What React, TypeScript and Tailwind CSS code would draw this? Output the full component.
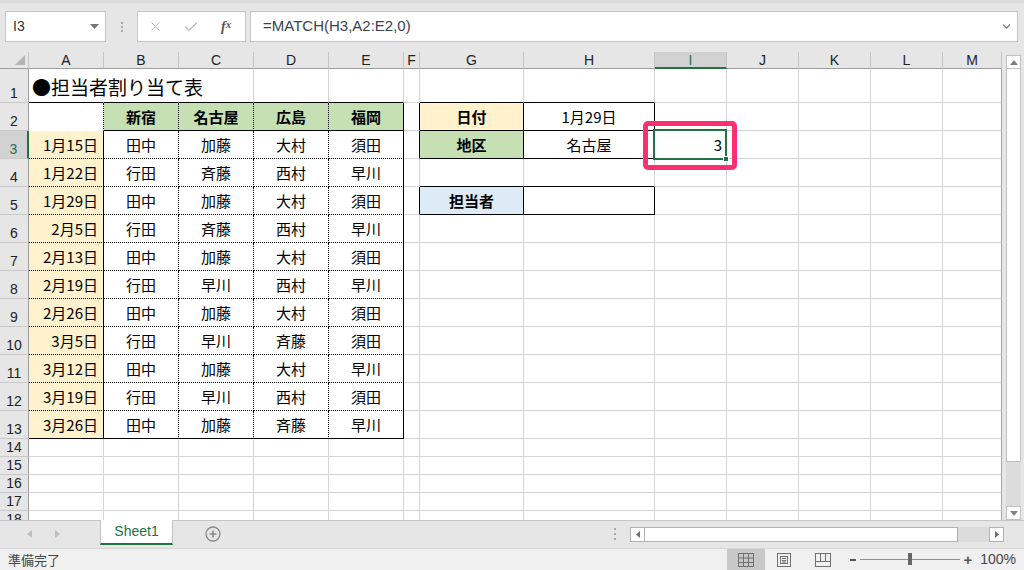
import { X, Check, ChevronDown } from 'lucide-react'

const COLS = ['A', 'B', 'C', 'D', 'E', 'F', 'G', 'H', 'I', 'J', 'K', 'L', 'M']

const ROWS: Record<number, string[]> = {
  3: ['1月15日', '田中', '加藤', '大村', '須田'],
  4: ['1月22日', '行田', '斉藤', '西村', '早川'],
  5: ['1月29日', '田中', '加藤', '大村', '須田'],
  6: ['2月5日', '行田', '斉藤', '西村', '早川'],
  7: ['2月13日', '田中', '加藤', '大村', '須田'],
  8: ['2月19日', '行田', '早川', '西村', '早川'],
  9: ['2月26日', '田中', '加藤', '大村', '須田'],
  10: ['3月5日', '行田', '早川', '斉藤', '須田'],
  11: ['3月12日', '田中', '加藤', '大村', '早川'],
  12: ['3月19日', '行田', '早川', '西村', '須田'],
  13: ['3月26日', '田中', '加藤', '斉藤', '早川'],
}

const HEAD = ['', '新宿', '名古屋', '広島', '福岡']

type B = 'g' | 's' | 'd' | 'n' | 'e'

const RIGHT: Record<B, string> = {
  g: 'border-r-[#d4d4d4]',
  s: 'border-r-black',
  d: 'border-r-black [border-right-style:dotted]',
  n: 'border-r-transparent',
  e: 'border-r-[#a6a6a6]',
}
const BOTTOM: Record<B, string> = {
  g: 'border-b-[#d4d4d4]',
  s: 'border-b-black',
  d: 'border-b-black [border-bottom-style:dotted]',
  n: 'border-b-transparent',
  e: 'border-b-[#a6a6a6]',
}

function borders(r: number, c: number): [B, B] {
  let right: B = c === 12 ? 'e' : 'g'
  let bottom: B = 'g'
  if (r === 1) {
    if (c === 0 || c === 1) right = 'n'
    if (c <= 4 || c === 6 || c === 7) bottom = 's'
  }
  if (r === 2) {
    if (c === 0) { right = 'd'; bottom = 'n' }
    if (c >= 1 && c <= 3) { right = 'd'; bottom = 's' }
    if (c === 4) { right = 's'; bottom = 's' }
  }
  if (r >= 3 && r <= 13 && c <= 4) {
    right = c === 0 || c === 4 ? 's' : 'd'
    bottom = r < 13 ? 'd' : 's'
  }
  if ((r === 2 || r === 3 || r === 5) && c === 5) right = 's'
  if ((r === 2 || r === 3 || r === 5) && (c === 6 || c === 7)) { right = 's'; bottom = 's' }
  if (r === 4 && (c === 6 || c === 7)) bottom = 's'
  return [right, bottom]
}

function Cell({ r, c }: { r: number; c: number }) {
  const [rb, bb] = borders(r, c)
  let bg = ''
  let align = 'justify-center'
  let bold = false
  let text = ''
  let overlay = false

  if (r === 1 && c === 0) {
    return (
      <div className={`border-r border-b ${RIGHT[rb]} ${BOTTOM[bb]} flex items-end pb-[2px] pl-[3px]`}>
        <span className="relative z-10 whitespace-nowrap text-[19px] leading-[26px] text-black">●担当者割り当て表</span>
      </div>
    )
  }
  if (r === 2 && c >= 1 && c <= 4) { text = HEAD[c]; bg = 'bg-[#c6e0b4]'; bold = true }
  if (ROWS[r] && c <= 4) {
    text = ROWS[r][c]
    if (c === 0) { bg = 'bg-[#fff2cc]'; align = 'justify-end pr-[5px]' }
  }
  if (r === 2 && c === 6) { text = '日付'; bg = 'bg-[#fff2cc]'; bold = true }
  if (r === 2 && c === 7) text = '1月29日'
  if (r === 3 && c === 6) { text = '地区'; bg = 'bg-[#c6e0b4]'; bold = true }
  if (r === 3 && c === 7) text = '名古屋'
  if (r === 5 && c === 6) { text = '担当者'; bg = 'bg-[#ddebf7]'; bold = true }
  if (r === 3 && c === 8) { text = '3'; align = 'justify-end pr-[4px]'; overlay = true }

  return (
    <div
      className={`relative border-r border-b ${RIGHT[rb]} ${BOTTOM[bb]} ${bg} flex items-end pb-[3px] ${align} text-[15px] leading-[20px] text-black ${bold ? 'font-bold' : ''}`}
    >
      {text}
      {overlay && (
        <>
          <div className="absolute -left-[2px] -top-[2px] -right-[1px] -bottom-[2px] border-2 border-[#217346] z-20" />
          <div className="absolute -right-[3px] -bottom-[4px] w-[6px] h-[6px] bg-[#217346] border border-white z-20" />
          <div className="absolute -left-[12px] -top-[10px] -right-[11px] -bottom-[12px] border-[5px] border-[#fe2f6f] rounded-[5px] z-30" />
        </>
      )}
    </div>
  )
}

function RowHead({ r }: { r: number }) {
  const sel = r === 3
  return (
    <div
      className={`flex items-end justify-center pb-[1px] border-b border-b-[#c8c8c8] font-['Liberation_Sans',sans-serif] text-[14px] leading-[16px] ${
        sel ? 'bg-[#d2d2d2] border-r-2 border-r-[#217346] text-[#217346]' : 'bg-[#e6e6e6] border-r border-r-[#9e9e9e] text-[#222]'
      }`}
    >
      {r}
    </div>
  )
}

function ColHead({ c }: { c: number }) {
  const sel = c === 8
  return (
    <div
      className={`flex items-center justify-center pt-[1px] border-r border-r-[#c4c4c4] font-['Liberation_Sans',sans-serif] text-[14px] ${
        sel ? 'bg-[#d2d2d2] border-b-2 border-b-[#217346] text-[#217346]' : 'bg-[#e6e6e6] border-b border-b-[#9e9e9e] text-[#222]'
      }`}
    >
      {COLS[c]}
    </div>
  )
}

function Sheet() {
  const cells = []
  cells.push(
    <div key="corner" className="relative bg-[#e6e6e6] border-r border-b border-r-[#c4c4c4] border-b-[#9e9e9e]">
      <svg className="absolute right-[3px] bottom-[3px]" width="10" height="10" viewBox="0 0 10 10">
        <polygon points="10,0 10,10 0,10" fill="#b4b4b4" />
      </svg>
    </div>
  )
  for (let c = 0; c < 13; c++) cells.push(<ColHead key={`h${c}`} c={c} />)
  for (let r = 1; r <= 18; r++) {
    cells.push(<RowHead key={`r${r}`} r={r} />)
    for (let c = 0; c < 13; c++) cells.push(<Cell key={`${r}-${c}`} r={r} c={c} />)
  }
  return (
    <div className="w-[1002px] h-[468px] overflow-hidden bg-white grid grid-cols-[29px_75px_75px_75px_75px_75px_16px_104px_131px_72px_72px_72px_72px_59px] grid-rows-[17px_34px_28px_28px_28px_28px_28px_28px_28px_28px_28px_28px_28px_28px_18px_18px_18px_18px_18px] font-['Noto_Sans_CJK_JP',sans-serif]">
      {cells}
    </div>
  )
}

function VScroll() {
  return (
    <div className="w-[22px] h-[468px] bg-[#e6e6e6] flex flex-col pl-[4px] pr-[3px] pt-[3px]">
      <div className="h-[14px] bg-white border border-[#c0c0c0] flex items-center justify-center">
        <svg width="8" height="5" viewBox="0 0 8 5"><polygon points="0,5 8,5 4,0" fill="#808080" /></svg>
      </div>
      <div className="h-[393px] bg-white border border-t-0 border-[#c0c0c0]" />
      <div className="flex-1 bg-[#dcdcdc]" />
      <div className="h-[14px] bg-white border border-[#c0c0c0] flex items-center justify-center">
        <svg width="8" height="5" viewBox="0 0 8 5"><polygon points="0,0 8,0 4,5" fill="#808080" /></svg>
      </div>
    </div>
  )
}

function TopBar() {
  return (
    <div className="h-[52px] bg-[#e6e6e6] border-t-[3px] border-t-[#dcdcdc] flex items-start pt-[8px] pl-[5px] font-['Liberation_Sans',sans-serif]">
      <div className="w-[101px] h-[31px] bg-white border border-[#c6c6c6] flex items-center justify-between pl-[7px] pr-[6px]">
        <span className="text-[14px] text-[#333]">I3</span>
        <svg width="9" height="5" viewBox="0 0 9 5"><polygon points="0,0 9,0 4.5,5" fill="#777" /></svg>
      </div>
      <div className="w-[31px] h-[31px] flex flex-col items-center justify-center gap-[2px]">
        <div className="w-[2px] h-[2px] bg-[#aaa]" />
        <div className="w-[2px] h-[2px] bg-[#aaa]" />
        <div className="w-[2px] h-[2px] bg-[#aaa]" />
      </div>
      <div className="w-[109px] h-[31px] bg-white border border-[#c6c6c6] flex items-center">
        <div className="w-[36px] flex justify-center"><X size={15} strokeWidth={1.5} color="#b4b4b4" /></div>
        <div className="w-[34px] flex justify-center"><Check size={16} strokeWidth={1.8} color="#b4b4b4" /></div>
        <div className="w-[38px] flex justify-center font-['Liberation_Serif',serif] italic font-bold text-[14px] text-[#555]">
          f<span className="text-[11px]">x</span>
        </div>
      </div>
      <div className="ml-[4px] w-[768px] h-[31px] bg-white border border-[#c6c6c6] flex items-center justify-between pl-[12px] pr-[4px]">
        <span className="text-[15px] text-[#3a4250]">=MATCH(H3,A2:E2,0)</span>
        <ChevronDown size={13} strokeWidth={2.5} color="#777" />
      </div>
    </div>
  )
}

function TabBar() {
  return (
    <div className="h-[28px] bg-[#e6e6e6] border-t border-[#c6c6c6] flex items-start font-['Liberation_Sans',sans-serif]">
      <div className="w-[100px] h-[26px] flex items-center">
        <svg className="ml-[27px]" width="5" height="8" viewBox="0 0 5 8"><polygon points="5,0 5,8 0,4" fill="#bdbdbd" /></svg>
        <svg className="ml-[23px]" width="5" height="8" viewBox="0 0 5 8"><polygon points="0,0 0,8 5,4" fill="#bdbdbd" /></svg>
      </div>
      <div className="-mt-px w-[73px] h-[25px] bg-white border-x border-[#c0c0c0] border-b-2 border-b-[#217346] flex items-center justify-center text-[14px] text-[#217346]">
        Sheet1
      </div>
      <div className="ml-[32px] h-[26px] flex items-center">
        <svg width="16" height="16" viewBox="0 0 16 16">
          <circle cx="8" cy="8" r="7" fill="none" stroke="#8a8a8a" strokeWidth="1.3" />
          <path d="M8 4.5v7M4.5 8h7" stroke="#8a8a8a" strokeWidth="1.6" />
        </svg>
      </div>
      <div className="ml-[393px] h-[26px] flex flex-col justify-center gap-[3px]">
        <div className="w-[2px] h-[2px] bg-[#aaa]" />
        <div className="w-[2px] h-[2px] bg-[#aaa]" />
        <div className="w-[2px] h-[2px] bg-[#aaa]" />
      </div>
      <div className="ml-[14px] mt-[6px] flex h-[15px]">
        <div className="w-[15px] bg-white border border-[#b0b0b0] flex items-center justify-center">
          <svg width="4" height="7" viewBox="0 0 4 7"><polygon points="4,0 4,7 0,3.5" fill="#707070" /></svg>
        </div>
        <div className="w-[313px] bg-white border-y border-r border-[#b0b0b0]" />
        <div className="w-[31px] bg-[#dcdcdc]" />
        <div className="w-[15px] bg-white border border-[#b0b0b0] flex items-center justify-center">
          <svg width="4" height="7" viewBox="0 0 4 7"><polygon points="0,0 0,7 4,3.5" fill="#707070" /></svg>
        </div>
      </div>
    </div>
  )
}

function StatusBar() {
  return (
    <div className="h-[22px] bg-[#f0f0f0] border-t border-[#d6d6d6] flex items-center font-['Liberation_Sans','Noto_Sans_CJK_JP',sans-serif]">
      <span className="ml-[8px] text-[13px] text-[#444] font-['Noto_Sans_CJK_JP',sans-serif]">準備完了</span>
      <div className="ml-auto flex items-center h-full">
        <div className="w-[38px] h-full bg-[#c8c8c8] flex items-center justify-center">
          <svg width="16" height="14" viewBox="0 0 16 14">
            <rect x="0.5" y="0.5" width="15" height="13" fill="none" stroke="#707070" />
            <path d="M5.5 0.5v13M10.5 0.5v13M0.5 5h15M0.5 9.5h15" stroke="#707070" />
          </svg>
        </div>
        <div className="w-[38px] h-full flex items-center justify-center">
          <svg width="14" height="14" viewBox="0 0 14 14">
            <rect x="0.5" y="0.5" width="13" height="13" fill="none" stroke="#707070" />
            <rect x="3.5" y="3.5" width="7" height="7" fill="none" stroke="#707070" />
            <path d="M5 5.5h4M5 7.5h4M5 9h4" stroke="#707070" />
          </svg>
        </div>
        <div className="w-[40px] h-full flex items-center justify-center">
          <svg width="16" height="14" viewBox="0 0 16 14">
            <rect x="0.5" y="0.5" width="15" height="13" fill="none" stroke="#707070" />
            <path d="M0.5 8.5h15M5.5 0.5v8M10.5 0.5v8" stroke="#707070" />
          </svg>
        </div>
        <div className="ml-[7px] w-[6px] h-[2px] bg-[#555]" />
        <div className="relative ml-[4px] w-[100px] h-[1px] bg-[#909090]">
          <div className="absolute left-[48px] -top-[6px] w-[4px] h-[12px] bg-[#666]" />
        </div>
        <span className="ml-[3px] text-[15px] font-bold text-[#555] leading-none">+</span>
        <span className="ml-[8px] mr-[8px] text-[14px] text-[#444]">100%</span>
      </div>
    </div>
  )
}

export default function App() {
  return (
    <div className="w-[1024px] h-[570px] overflow-hidden bg-[#e6e6e6] flex flex-col">
      <TopBar />
      <div className="flex">
        <Sheet />
        <VScroll />
      </div>
      <TabBar />
      <StatusBar />
    </div>
  )
}
